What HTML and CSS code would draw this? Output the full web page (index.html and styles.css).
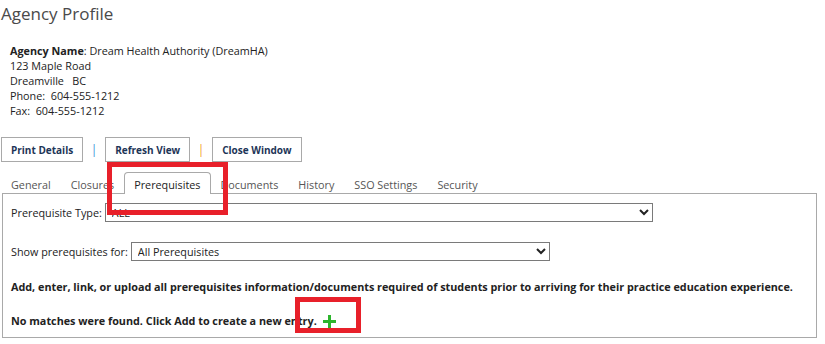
FILE: index.html
```html
<!DOCTYPE html>
<html lang="en">
<head>
    <meta charset="UTF-8">
    <title>Agency Profile</title>
    <link rel="stylesheet" href="styles.css">
</head>
<body>
    <div class="page">
        <h1>Agency Profile</h1>

        <div class="agency">
            <div><b>Agency Name</b>: Dream Health Authority (DreamHA)</div>
            <div>123 Maple Road</div>
            <div>Dreamville&nbsp;&nbsp; BC</div>
            <div>Phone:&nbsp; 604-555-1212</div>
            <div>Fax:&nbsp; 604-555-1212</div>
        </div>

        <div class="actions">
            <button class="btn">Print Details</button>
            <span class="sep blue">|</span>
            <button class="btn">Refresh View</button>
            <span class="sep orange">|</span>
            <button class="btn">Close Window</button>
        </div>

        <div class="tabs">
            <div class="tab">General</div>
            <div class="tab">Closures</div>
            <div class="tab active">Prerequisites</div>
            <div class="tab">Documents</div>
            <div class="tab">History</div>
            <div class="tab">SSO Settings</div>
            <div class="tab">Security</div>
        </div>

        <div class="panel">
            <div class="field">
                <label for="prereqType">Prerequisite Type:</label>
                <select id="prereqType" class="select-type">
                    <option>ALL</option>
                </select>
            </div>
            <div class="field second">
                <label for="showFor">Show prerequisites for:</label>
                <select id="showFor" class="select-show">
                    <option>All Prerequisites</option>
                </select>
            </div>
            <p class="note">Add, enter, link, or upload all prerequisites information/documents required of students prior to arriving for their practice education experience.</p>
            <p class="note empty">No matches were found. Click Add to create a new entry.
                <svg class="add-icon" width="13" height="13" viewBox="0 0 13 13">
                    <rect x="5" y="0" width="3" height="13" fill="#2db52d"/>
                    <rect x="0" y="5" width="13" height="3" fill="#2db52d"/>
                </svg>
            </p>
        </div>

        <!-- annotation boxes drawn over the screenshot -->
        <div class="mark mark-tab"></div>
        <div class="mark mark-add"></div>
    </div>
</body>
</html>
```

FILE: styles.css
```css
* {
    box-sizing: border-box;
    margin: 0;
    padding: 0;
}

body {
    font-family: 'Open Sans', sans-serif;
    font-size: 10.8px;
    color: #222;
    background-color: #fff;
}

.page {
    position: relative;
    width: 825px;
    height: 344px;
    overflow: hidden;
}

h1 {
    font-size: 17px;
    font-weight: 400;
    color: #4a4a4a;
    line-height: 24px;
    padding: 2px 0 0 1px;
}

.agency {
    margin-top: 17px;
    padding-left: 10px;
    line-height: 15px;
}

.agency b {
    font-weight: 700;
}

.actions {
    display: flex;
    align-items: center;
    margin-top: 19px;
    padding-left: 1px;
}

.btn {
    height: 25px;
    padding: 0 9px;
    border: 1px solid #a9a9a9;
    background-color: #fff;
    font-family: 'Open Sans', sans-serif;
    font-size: 10px;
    font-weight: 700;
    color: #1d3557;
    cursor: pointer;
}

.sep {
    width: 22px;
    text-align: center;
    font-size: 12px;
}

.sep.blue {
    color: #3a8fd8;
}

.sep.orange {
    color: #f29a1f;
}

.tabs {
    display: flex;
    align-items: flex-end;
    margin: 9px 8px 0 2px;
    padding-left: 0;
    height: 23px;
    border-bottom: 1px solid #a9a9a9;
}

.tab {
    padding: 0 9px 1px;
    font-size: 10.8px;
    color: #555;
    margin-bottom: -1px;
    line-height: 16px;
    border: 1px solid transparent;
    border-bottom: none;
}

.tab:first-child {
    margin-left: -1px;
}

.tab.active {
    height: 22px;
    padding-top: 4px;
    border-color: #a9a9a9;
    border-radius: 4px 4px 0 0;
    background-color: #fff;
    color: #222;
}

.panel {
    margin: 0 8px 0 2px;
    height: 144px;
    border: 1px solid #a9a9a9;
    border-top: none;
    padding: 9px 0 0 8px;
}

.field {
    display: flex;
    align-items: center;
    gap: 3px;
}

.field.second {
    margin-top: 20px;
}

.field label {
    color: #222;
}

select {
    height: 19px;
    border: 1px solid #7a7a7a;
    border-radius: 0;
    background-color: #fff;
    font-family: 'Open Sans', sans-serif;
    font-size: 10.8px;
    color: #222;
    padding: 0 2px;
}

.select-type {
    width: 548px;
}

.select-show {
    width: 419px;
}

.note {
    font-weight: 700;
    margin-top: 18px;
    line-height: 16px;
}

.note.empty {
    margin-top: 18px;
    display: flex;
    align-items: center;
}

.add-icon {
    margin-left: 6px;
}

.mark {
    position: absolute;
    border: 5px solid #e8202a;
}

.mark-tab {
    left: 107px;
    top: 162px;
    width: 121px;
    height: 53px;
}

.mark-add {
    left: 295px;
    top: 297px;
    width: 66px;
    height: 36px;
}
```
